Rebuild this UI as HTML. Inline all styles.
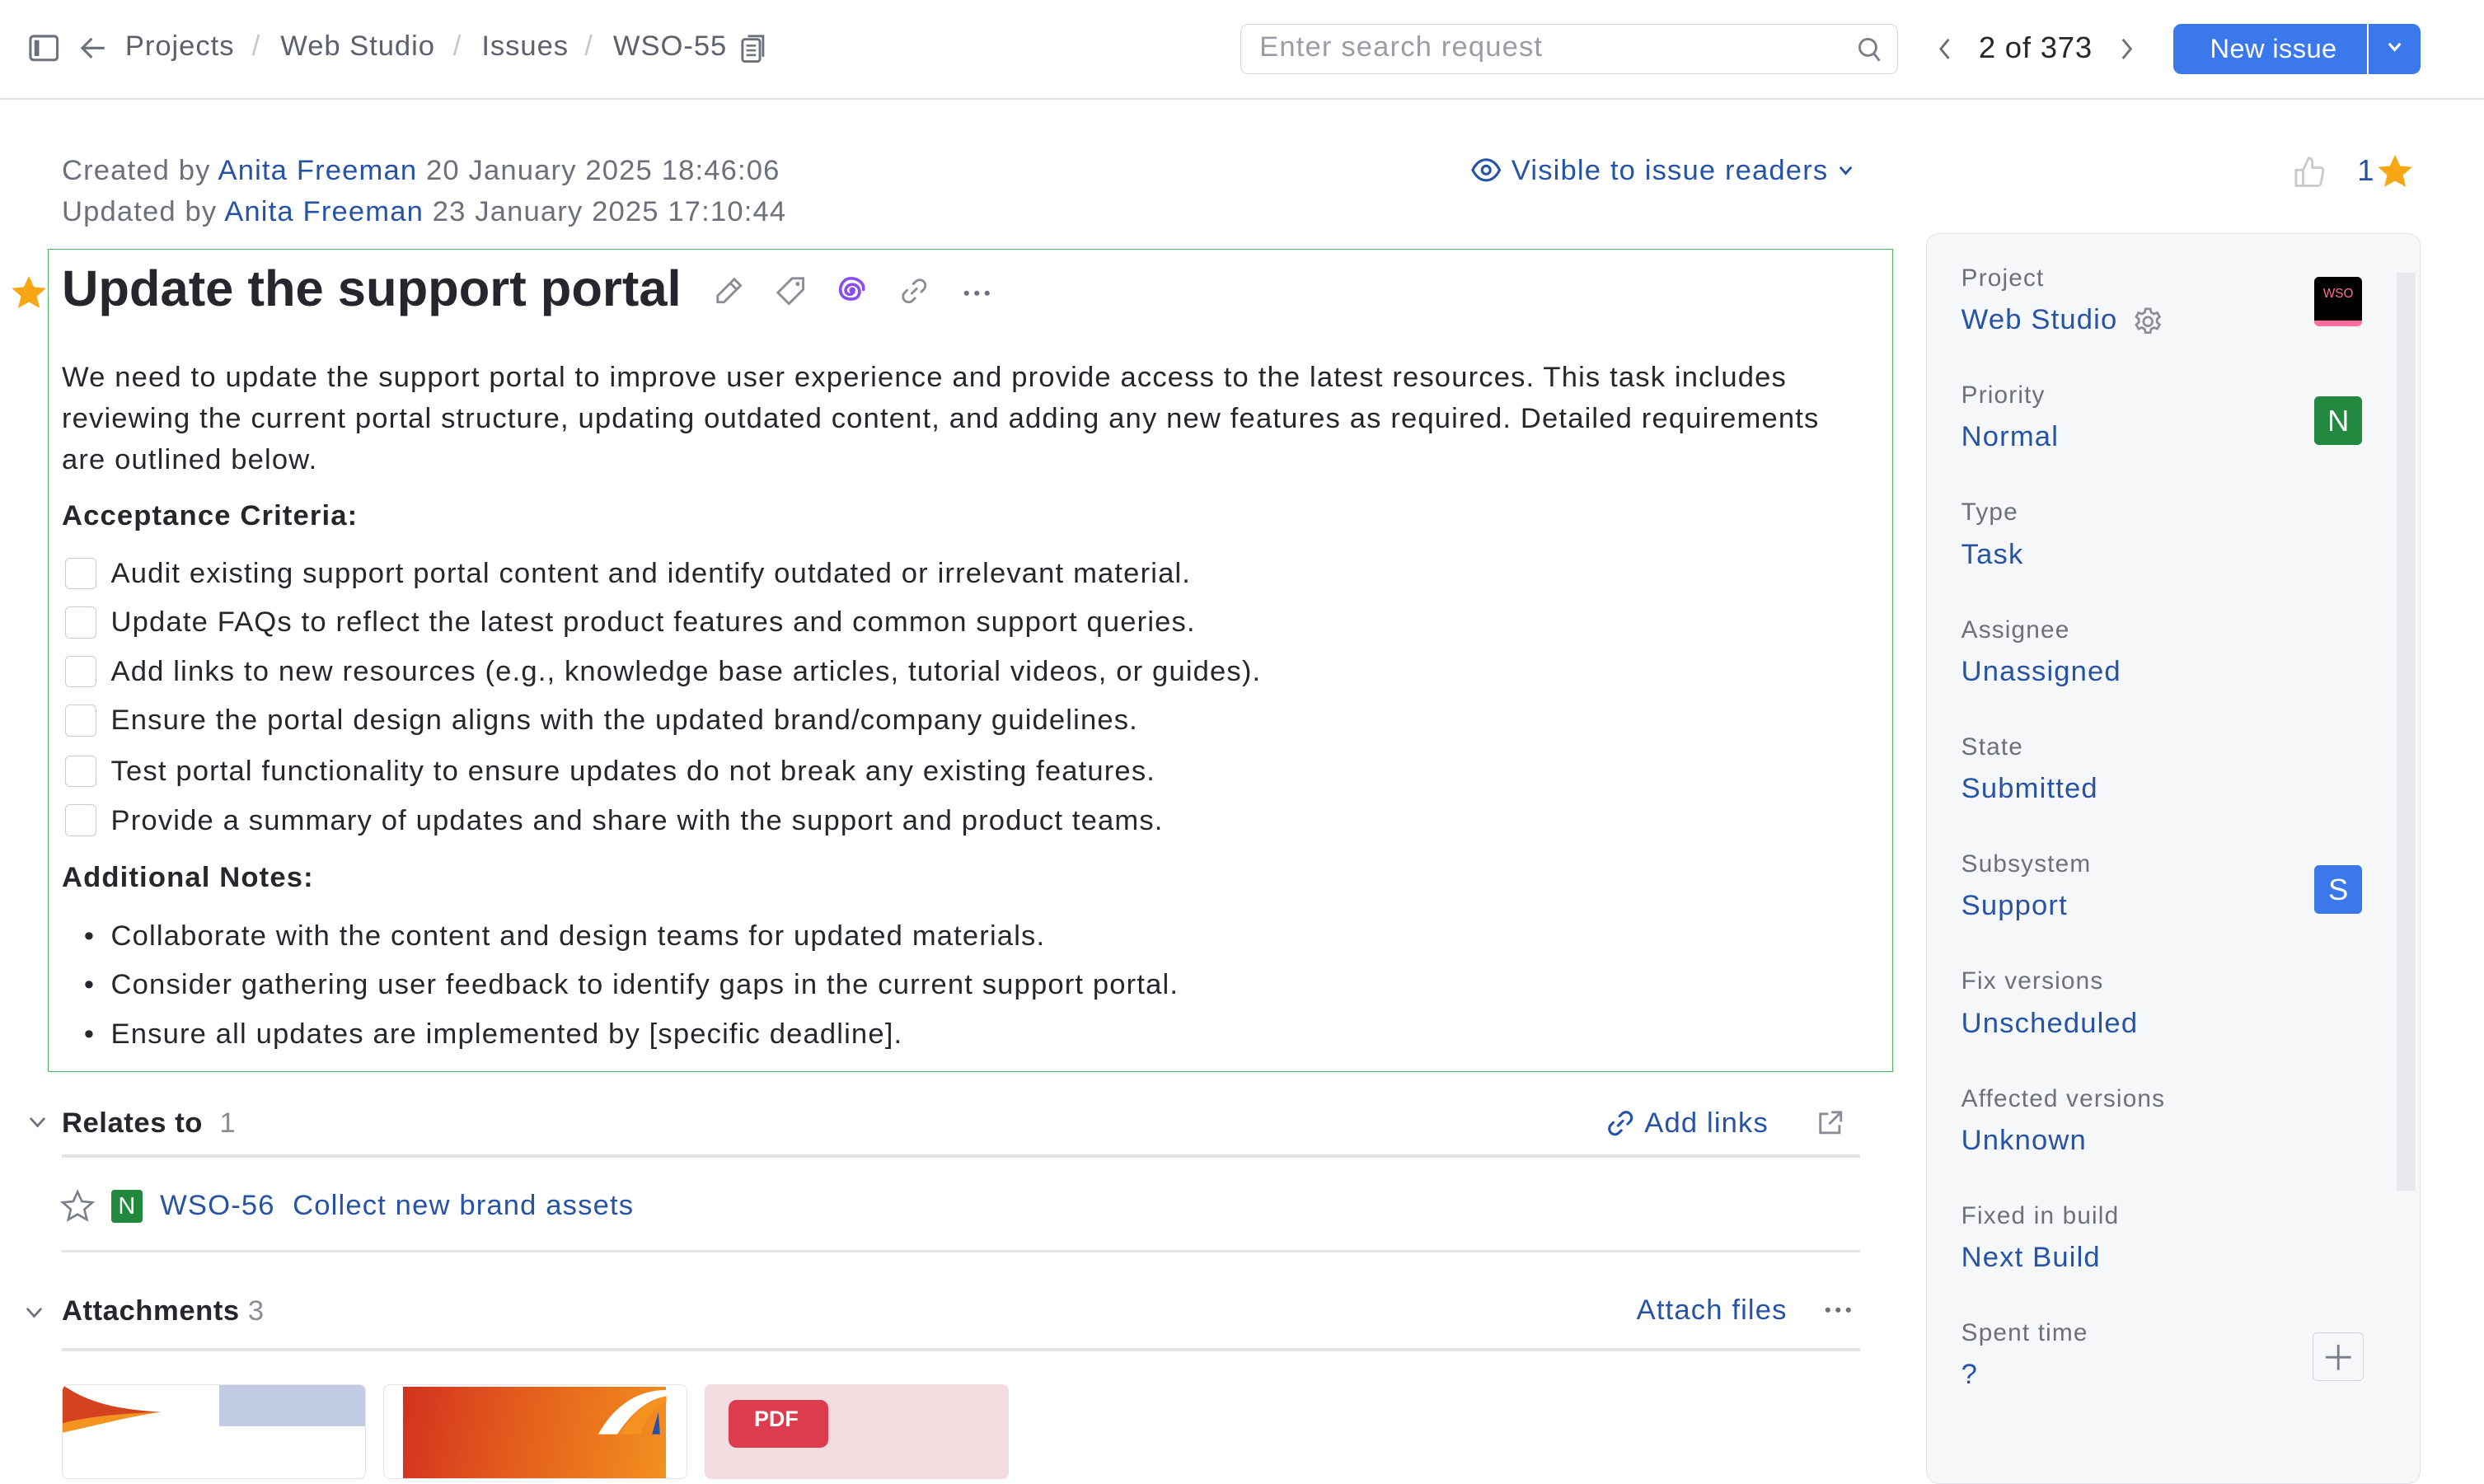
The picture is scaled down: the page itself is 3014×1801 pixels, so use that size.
<!DOCTYPE html>
<html><head><meta charset="utf-8"><style>
html{zoom:1.9222}
*{box-sizing:border-box;margin:0;padding:0}
body{width:1568px;height:902px;overflow:hidden;background:#fff;font-family:"Liberation Sans",Arial,sans-serif;color:#25272d;position:relative;letter-spacing:0.6px}
.a{position:absolute;white-space:nowrap}
.g{color:#6c707b}.b{color:#2653a6}
.bc{font-size:18px;color:#5d616c;top:19px;letter-spacing:0.5px}
.sep{color:#c5c7cd}
.t{font-size:18px;line-height:22px}
.cb{position:absolute;left:41px;width:20px;height:20px;border:1px solid #c9cbd1;border-radius:3px;background:#fff}
.lbl{font-size:15.5px;color:#6c707b;left:1238px}
.val{font-size:18px;color:#2653a6;left:1238px}
.bd{position:absolute;left:1461px;width:30px;height:31px;border-radius:3px;color:#fff;font-size:19px;text-align:center;line-height:31px;letter-spacing:0}
svg{position:absolute}
</style></head><body>
<!-- top bar -->
<svg style="left:18px;top:22px" width="19" height="17" viewBox="0 0 19 17"><rect x="1" y="1" width="17" height="15" rx="2" fill="none" stroke="#6c707b" stroke-width="1.6"/><rect x="3.5" y="3.5" width="3" height="10" fill="#6c707b"/></svg>
<svg style="left:50px;top:22px" width="18" height="17" viewBox="0 0 18 17"><path d="M16 8.5H2M8 2.5L2 8.5L8 14.5" fill="none" stroke="#6c707b" stroke-width="1.6"/></svg>
<div class="a bc" style="left:79px">Projects</div>
<div class="a bc sep" style="left:159px">/</div>
<div class="a bc" style="left:177px">Web Studio</div>
<div class="a bc sep" style="left:286px">/</div>
<div class="a bc" style="left:304px">Issues</div>
<div class="a bc sep" style="left:369px">/</div>
<div class="a bc" style="left:387px">WSO-55</div>
<svg style="left:467px;top:21px" width="18" height="20" viewBox="0 0 18 20"><rect x="1.5" y="4" width="11" height="14" rx="1.5" fill="none" stroke="#6c707b" stroke-width="1.5"/><path d="M5 2h9.5v13" fill="none" stroke="#6c707b" stroke-width="1.5"/><path d="M4 8h6M4 11h6M4 14h6" stroke="#6c707b" stroke-width="1.3"/></svg>
<div class="a" style="left:783px;top:15px;width:415px;height:32px;border:1px solid #d3d5da;border-radius:5px"></div>
<div class="a" style="left:795px;top:20px;font-size:18px;color:#9a9da6">Enter search request</div>
<svg style="left:1172px;top:23px" width="16" height="17" viewBox="0 0 16 17"><circle cx="7" cy="7" r="5.2" fill="none" stroke="#7a7e88" stroke-width="1.5"/><path d="M10.8 11l3.5 4.5" stroke="#7a7e88" stroke-width="1.5"/></svg>
<svg style="left:1223px;top:23px" width="10" height="16" viewBox="0 0 10 16"><path d="M7 2L2 8l5 6" fill="none" stroke="#6c707b" stroke-width="1.5"/></svg>
<div class="a" style="left:1249px;top:19px;font-size:19px;color:#25272d;letter-spacing:0.4px">2 of 373</div>
<svg style="left:1337px;top:23px" width="10" height="16" viewBox="0 0 10 16"><path d="M3 2l5 6-5 6" fill="none" stroke="#6c707b" stroke-width="1.5"/></svg>
<div class="a" style="left:1372px;top:15px;width:156px;height:32px;background:#3a78ec;border-radius:5px"></div>
<div class="a" style="left:1494px;top:15px;width:1px;height:32px;background:#fff"></div>
<div class="a" style="left:1395px;top:21px;font-size:17px;color:#fff;letter-spacing:0.2px">New issue</div>
<svg style="left:1506px;top:25px" width="11" height="9" viewBox="0 0 11 9"><path d="M2 2.5l3.5 4 3.5-4" fill="none" stroke="#fff" stroke-width="1.6"/></svg>
<div class="a" style="left:0;top:62px;width:1568px;height:1px;background:#dfe0e4"></div>

<!-- meta -->
<div class="a t g" style="left:39px;top:97px">Created by <span class="b">Anita Freeman</span> 20 January 2025 18:46:06</div>
<div class="a t g" style="left:39px;top:123px">Updated by <span class="b">Anita Freeman</span> 23 January 2025 17:10:44</div>
<svg style="left:928px;top:99px" width="20" height="17" viewBox="0 0 20 17"><path d="M1.5 8.5C4 3.5 7 2 10 2s6 1.5 8.5 6.5C16 13.5 13 15 10 15s-6-1.5-8.5-6.5z" fill="none" stroke="#2653a6" stroke-width="1.6"/><circle cx="10" cy="8.5" r="2.6" fill="none" stroke="#2653a6" stroke-width="1.6"/></svg>
<div class="a t b" style="left:954px;top:97px">Visible to issue readers</div>
<svg style="left:1159px;top:103px" width="12" height="9" viewBox="0 0 12 9"><path d="M2.5 2.5l3.5 4 3.5-4" fill="none" stroke="#2653a6" stroke-width="1.5"/></svg>
<svg style="left:1448px;top:98px" width="20" height="22" viewBox="0 0 20 22"><path d="M6 9.5L9.5 2c1.6 0 2.3 1 2.3 2.5V8h5c1.2 0 2 1 1.8 2.2l-1.3 7.5c-.2 1-1 1.8-2 1.8H6zM1.5 9.5H6v10H1.5z" fill="none" stroke="#c9cbd1" stroke-width="1.5"/></svg>
<div class="a" style="left:1488px;top:97px;font-size:19px;color:#2653a6">1</div>
<svg style="left:1500px;top:97px" width="24" height="23" viewBox="0 0 24 23"><path d="M12 1l3.2 7 7.6.7-5.8 5.1 1.8 7.5L12 17.4 5.2 21.3 7 13.8 1.2 8.7 8.8 8z" fill="#f7a614"/></svg>

<!-- description box -->
<div class="a" style="left:30px;top:157px;width:1165px;height:520px;border:1px solid #4fb45d"></div>
<svg style="left:6px;top:173px" width="24" height="23" viewBox="0 0 24 23"><path d="M12 1l3.2 7 7.6.7-5.8 5.1 1.8 7.5L12 17.4 5.2 21.3 7 13.8 1.2 8.7 8.8 8z" fill="#f7a614"/></svg>
<div class="a" style="left:39px;top:164px;font-size:32px;font-weight:bold;color:#25272d;letter-spacing:0px">Update the support portal</div>
<svg style="left:450px;top:174px" width="20" height="20" viewBox="0 0 20 20"><path d="M13.5 2.5l4 4L7 17H3v-4zM11 5l4 4" fill="none" stroke="#8a8d96" stroke-width="1.5"/></svg>
<svg style="left:489px;top:174px" width="20" height="20" viewBox="0 0 20 20"><path d="M11 2h7v7l-9 9-7-7z" fill="none" stroke="#8a8d96" stroke-width="1.5"/><circle cx="14.5" cy="5.5" r="1.3" fill="#8a8d96"/></svg>
<svg style="left:528px;top:174px" width="20" height="20" viewBox="0 0 20 20"><path d="M10 10.5a1 1 0 1 1 1-1c0 2-2 3-3.5 2.5S5 9.5 6.5 7.5s5-2.5 7 0 1 7-3 7.5-7.5-1-8-5 2.5-8 6.5-8 8.5 2.5 8 7" fill="none" stroke="#8a4df0" stroke-width="1.9" stroke-linecap="round"/></svg>
<svg style="left:567px;top:174px" width="20" height="20" viewBox="0 0 20 20"><path d="M8.5 11.5l3-3M9.5 5.5l1.5-1.5a3.5 3.5 0 0 1 5 5L14.5 10.5M10.5 14.5L9 16a3.5 3.5 0 0 1-5-5l1.5-1.5" fill="none" stroke="#8a8d96" stroke-width="1.5" stroke-linecap="round"/></svg>
<svg style="left:607px;top:182px" width="20" height="6" viewBox="0 0 20 6"><circle cx="3" cy="3" r="1.6" fill="#6c707b"/><circle cx="9.5" cy="3" r="1.6" fill="#6c707b"/><circle cx="16" cy="3" r="1.6" fill="#6c707b"/></svg>

<div class="a t" style="left:39px;top:226px;line-height:26px">We need to update the support portal to improve user experience and provide access to the latest resources. This task includes<br>reviewing the current portal structure, updating outdated content, and adding any new features as required. Detailed requirements<br>are outlined below.</div>
<div class="a t" style="left:39px;top:315px;font-weight:bold">Acceptance Criteria:</div>
<div class="cb" style="top:352px"></div><div class="a t" style="left:70px;top:351px">Audit existing support portal content and identify outdated or irrelevant material.</div>
<div class="cb" style="top:383px"></div><div class="a t" style="left:70px;top:382px">Update FAQs to reflect the latest product features and common support queries.</div>
<div class="cb" style="top:414px"></div><div class="a t" style="left:70px;top:413px">Add links to new resources (e.g., knowledge base articles, tutorial videos, or guides).</div>
<div class="cb" style="top:445px"></div><div class="a t" style="left:70px;top:444px">Ensure the portal design aligns with the updated brand/company guidelines.</div>
<div class="cb" style="top:477px"></div><div class="a t" style="left:70px;top:476px">Test portal functionality to ensure updates do not break any existing features.</div>
<div class="cb" style="top:508px"></div><div class="a t" style="left:70px;top:507px">Provide a summary of updates and share with the support and product teams.</div>
<div class="a t" style="left:39px;top:543px;font-weight:bold">Additional Notes:</div>
<div class="a t" style="left:53px;top:580px">•</div><div class="a t" style="left:70px;top:580px">Collaborate with the content and design teams for updated materials.</div>
<div class="a t" style="left:53px;top:611px">•</div><div class="a t" style="left:70px;top:611px">Consider gathering user feedback to identify gaps in the current support portal.</div>
<div class="a t" style="left:53px;top:642px">•</div><div class="a t" style="left:70px;top:642px">Ensure all updates are implemented by [specific deadline].</div>

<!-- relates -->
<svg style="left:17px;top:704px" width="13" height="9" viewBox="0 0 13 9"><path d="M2 2l4.5 5L11 2" fill="none" stroke="#6c707b" stroke-width="1.4"/></svg>
<div class="a t" style="left:39px;top:698px;font-weight:bold;letter-spacing:0.3px">Relates to <span style="font-weight:normal;color:#8a8d96">&nbsp;1</span></div>
<svg style="left:1013px;top:699px" width="20" height="20" viewBox="0 0 20 20"><path d="M8.5 11.5l3-3M9.5 5.5l1.5-1.5a3.5 3.5 0 0 1 5 5L14.5 10.5M10.5 14.5L9 16a3.5 3.5 0 0 1-5-5l1.5-1.5" fill="none" stroke="#2653a6" stroke-width="1.6" stroke-linecap="round"/></svg>
<div class="a t b" style="left:1038px;top:698px">Add links</div>
<svg style="left:1146px;top:700px" width="18" height="18" viewBox="0 0 18 18"><path d="M8 3H3v12h12v-5M10 2h6v6M16 2L8.5 9.5" fill="none" stroke="#8a8d96" stroke-width="1.5"/></svg>
<div class="a" style="left:39px;top:729px;width:1135px;height:2px;background:#e3e4e8"></div>
<svg style="left:38px;top:750px" width="22" height="22" viewBox="0 0 24 23"><path d="M12 2l3 6.6 7.2.7-5.5 4.8 1.7 7.1L12 17.5l-6.4 3.7 1.7-7.1L1.8 9.3 9 8.6z" fill="none" stroke="#7a7e88" stroke-width="1.5"/></svg>
<div class="a" style="left:70px;top:751px;width:20px;height:21px;background:#21883d;border-radius:2px;color:#fff;font-size:15px;text-align:center;line-height:21px;letter-spacing:0">N</div>
<div class="a t b" style="left:101px;top:750px">WSO-56&nbsp;&nbsp;Collect new brand assets</div>
<div class="a" style="left:39px;top:789px;width:1135px;height:2px;background:#e3e4e8"></div>

<!-- attachments -->
<svg style="left:15px;top:824px" width="13" height="9" viewBox="0 0 13 9"><path d="M2 2l4.5 5L11 2" fill="none" stroke="#6c707b" stroke-width="1.4"/></svg>
<div class="a t" style="left:39px;top:817px;font-weight:bold;letter-spacing:0.3px">Attachments <span style="font-weight:normal;color:#8a8d96">3</span></div>
<div class="a t b" style="left:1033px;top:816px">Attach files</div>
<svg style="left:1151px;top:824px" width="20" height="6" viewBox="0 0 20 6"><circle cx="3" cy="3" r="1.6" fill="#6c707b"/><circle cx="9.5" cy="3" r="1.6" fill="#6c707b"/><circle cx="16" cy="3" r="1.6" fill="#6c707b"/></svg>
<div class="a" style="left:39px;top:851px;width:1135px;height:2px;background:#e3e4e8"></div>
<div class="a" style="left:39px;top:874px;width:192px;height:60px;border:1px solid #e3e4e8;border-radius:4px;overflow:hidden;background:#fff">
 <div class="a" style="left:99px;top:0;width:92px;height:26px;background:#c2cce2"></div>
 <svg style="left:0;top:0" width="70" height="30" viewBox="0 0 70 30"><path d="M0 0c15 10 30 15 62 17-20 3-40 5-62 13z" fill="#d4421f"/><path d="M0 24c20-5 40-6 62-7-20 3-35 7-62 13z" fill="#f4931d"/></svg>
</div>
<div class="a" style="left:242px;top:874px;width:192px;height:60px;border:1px solid #e3e4e8;border-radius:4px;overflow:hidden;background:#fff">
 <div class="a" style="left:12px;top:1px;width:166px;height:60px;background:linear-gradient(100deg,#d3311f,#e5631c 50%,#f39020)"></div>
 <svg style="left:120px;top:1px" width="60" height="30" viewBox="0 0 60 30"><path d="M58 2C40 2 25 12 15 30h12C35 18 45 8 58 6z" fill="#fff"/><path d="M58 6C46 8 36 18 28 30h14C45 20 50 12 58 10z" fill="#f59120"/><path d="M53 16l-4 14h5z" fill="#2a4fa8"/></svg>
</div>
<div class="a" style="left:445px;top:874px;width:192px;height:60px;background:#f1dde0;border-radius:4px">
 <div class="a" style="left:15px;top:10px;width:63px;height:30px;background:#dc3c4d;border-radius:5px;color:#fff;font-size:14px;font-weight:bold;padding:4px 0 0 16px;letter-spacing:0">PDF</div>
</div>

<!-- right panel -->
<div class="a" style="left:1216px;top:147px;width:312px;height:790px;background:#f6f7f9;border:1px solid #e3e4e8;border-radius:8px"></div>
<div class="a" style="left:1513px;top:172px;width:12px;height:580px;background:#e8e9ed"></div>
<div class="a lbl" style="top:167px">Project</div><div class="a val" style="top:192px">Web Studio</div>
<svg style="left:1346px;top:193px" width="20" height="20" viewBox="0 0 20 20"><circle cx="10" cy="10" r="2.8" fill="none" stroke="#8a8d96" stroke-width="1.4"/><path d="M8.5 2h3l.5 2.2 1.8 1 2.1-.8 1.5 2.6-1.7 1.5v2l1.7 1.5-1.5 2.6-2.1-.8-1.8 1-.5 2.2h-3l-.5-2.2-1.8-1-2.1.8-1.5-2.6 1.7-1.5v-2L2.6 7l1.5-2.6 2.1.8 1.8-1z" fill="none" stroke="#8a8d96" stroke-width="1.4"/></svg>
<div class="bd" style="top:175px;background:#000;overflow:hidden;font-size:8px;line-height:22px;color:#ff6e9a;border-bottom:4px solid #ff6e9a">WSO</div>
<div class="a lbl" style="top:241px">Priority</div><div class="a val" style="top:266px">Normal</div>
<div class="bd" style="top:250px;background:#21883d">N</div>
<div class="a lbl" style="top:315px">Type</div><div class="a val" style="top:340px">Task</div>
<div class="a lbl" style="top:389px">Assignee</div><div class="a val" style="top:414px">Unassigned</div>
<div class="a lbl" style="top:463px">State</div><div class="a val" style="top:488px">Submitted</div>
<div class="a lbl" style="top:537px">Subsystem</div><div class="a val" style="top:562px">Support</div>
<div class="bd" style="top:546px;background:#3a78ec">S</div>
<div class="a lbl" style="top:611px">Fix versions</div><div class="a val" style="top:636px">Unscheduled</div>
<div class="a lbl" style="top:685px">Affected versions</div><div class="a val" style="top:710px">Unknown</div>
<div class="a lbl" style="top:759px">Fixed in build</div><div class="a val" style="top:784px">Next Build</div>
<div class="a lbl" style="top:833px">Spent time</div><div class="a val" style="top:858px">?</div>
<div class="a" style="left:1460px;top:841px;width:32px;height:31px;border:1px solid #d3d5da;border-radius:3px;background:#f6f7f9"></div>
<svg style="left:1466px;top:847px" width="20" height="20" viewBox="0 0 20 20"><path d="M10 2v16M2 10h16" stroke="#7a7e88" stroke-width="1.5"/></svg>
</body></html>
